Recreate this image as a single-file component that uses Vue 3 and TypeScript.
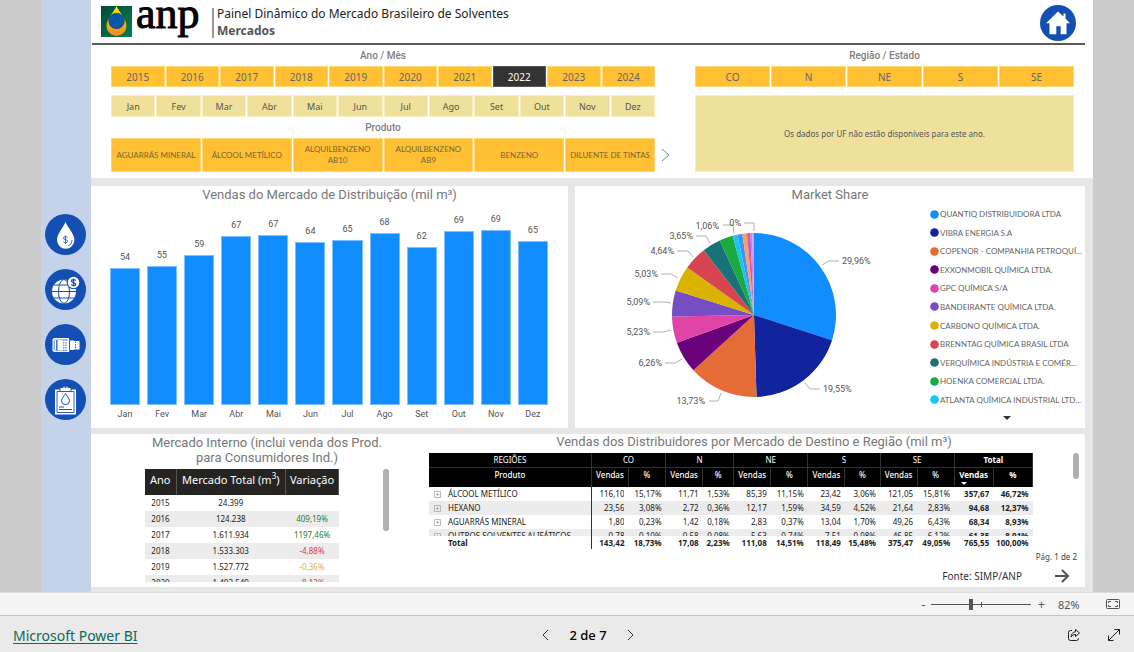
<script setup lang="ts">
import { ref } from 'vue'

interface Slice { share: number; color: string }
interface Callout { text: string; x: number; y: number; anchor: 'start' | 'end'; line: string }

const years = [2015, 2016, 2017, 2018, 2019, 2020, 2021, 2022, 2023, 2024]
const selectedYear = ref(2022)
const months = ['Jan', 'Fev', 'Mar', 'Abr', 'Mai', 'Jun', 'Jul', 'Ago', 'Set', 'Out', 'Nov', 'Dez']
const products = ['AGUARRÁS MINERAL', 'ÁLCOOL METÍLICO', 'ALQUILBENZENO AB10', 'ALQUILBENZENO AB9', 'BENZENO', 'DILUENTE DE TINTAS']
const regions = ['CO', 'N', 'NE', 'S', 'SE']
const zoom = ref(40)

const sales = [54.0, 54.8, 59.1, 66.9, 67.1, 64.3, 65.4, 67.8, 62.3, 68.8, 69.2, 64.9]
const axisMax = 83

const slices: Slice[] = [
  { share: 29.96, color: '#118dff' },
  { share: 19.55, color: '#12239e' },
  { share: 13.73, color: '#e66c37' },
  { share: 6.26, color: '#6b007b' },
  { share: 5.23, color: '#e044a7' },
  { share: 5.09, color: '#744ec2' },
  { share: 5.03, color: '#d9b300' },
  { share: 4.64, color: '#d64550' },
  { share: 3.65, color: '#197278' },
  { share: 2.67, color: '#1aab40' },
  { share: 0.95, color: '#15c6f4' },
  { share: 0.97, color: '#4092ff' },
  { share: 0.91, color: '#ffa058' },
  { share: 0.65, color: '#be5dc9' },
  { share: 0.39, color: '#f472d0' },
  { share: 0.32, color: '#b5a1ff' },
]
const radius = 82
const total = slices.reduce((sum, s) => sum + s.share, 0)
const point = (share: number): string => {
  const a = (share / total) * Math.PI * 2
  return `${(Math.sin(a) * radius).toFixed(2)} ${(-Math.cos(a) * radius).toFixed(2)}`
}
let run = 0
const wedges = slices.map((s) => {
  const from = run
  run += s.share
  return { color: s.color, d: `M0 0L${point(from)}A${radius} ${radius} 0 0 1 ${point(run)}Z` }
})

const callouts: Callout[] = [
  { text: '29,96%', x: 88, y: -51, anchor: 'start', line: '68,-50 75,-54 85,-54' },
  { text: '19,55%', x: 69, y: 77, anchor: 'start', line: '51,68 56,74 66,74' },
  { text: '13,73%', x: -49, y: 89, anchor: 'end', line: '-33,78 -36,86 -45,86' },
  { text: '6,26%', x: -92, y: 51, anchor: 'end', line: '-72,44 -79,48 -89,48' },
  { text: '5,23%', x: -104, y: 20, anchor: 'end', line: '-83,15 -90,17 -101,17' },
  { text: '5,09%', x: -104, y: -10, anchor: 'end', line: '-83,-12 -90,-13 -101,-13' },
  { text: '5,03%', x: -96, y: -38, anchor: 'end', line: '-76,-37 -83,-41 -93,-41' },
  { text: '4,64%', x: -80, y: -61, anchor: 'end', line: '-61,-58 -66,-64 -77,-64' },
  { text: '3,65%', x: -61, y: -76, anchor: 'end', line: '-44,-72 -48,-79 -58,-79' },
  { text: '1,06%', x: -35, y: -86, anchor: 'end', line: '-20,-82 -21,-90 -31,-90' },
  { text: '0%', x: -13, y: -89, anchor: 'end', line: '0,-84 0,-92 -10,-92' },
]

const companies = [
  'QUANTIQ DISTRIBUIDORA LTDA', 'VIBRA ENERGIA S.A', 'COPENOR - COMPANHIA PETROQUÍ...', 'EXXONMOBIL QUÍMICA LTDA.',
  'GPC QUÍMICA S/A', 'BANDEIRANTE QUÍMICA LTDA.', 'CARBONO QUÍMICA LTDA.', 'BRENNTAG QUÍMICA BRASIL LTDA',
  'VERQUÍMICA INDÚSTRIA E COMÉR...', 'HOENKA COMERCIAL LTDA.', 'ATLANTA QUÍMICA INDUSTRIAL LTD...',
]

const market = [
  { year: 2015, total: '24.399', change: '', tone: '' },
  { year: 2016, total: '124.238', change: '409,19%', tone: 'up' },
  { year: 2017, total: '1.611.934', change: '1197,46%', tone: 'up' },
  { year: 2018, total: '1.533.303', change: '-4,88%', tone: 'down' },
  { year: 2019, total: '1.527.772', change: '-0,36%', tone: 'flat' },
  { year: 2020, total: '1.403.549', change: '-8,13%', tone: 'down' },
]

const groups = ['CO', 'N', 'NE', 'S', 'SE', 'Total']
const matrix = [
  { name: 'ÁLCOOL METÍLICO', cells: ['116,10', '15,17%', '11,71', '1,53%', '85,39', '11,15%', '23,42', '3,06%', '121,05', '15,81%', '357,67', '46,72%'] },
  { name: 'HEXANO', cells: ['23,56', '3,08%', '2,72', '0,36%', '12,17', '1,59%', '34,59', '4,52%', '21,64', '2,83%', '94,68', '12,37%'] },
  { name: 'AGUARRÁS MINERAL', cells: ['1,80', '0,23%', '1,42', '0,18%', '2,83', '0,37%', '13,04', '1,70%', '49,26', '6,43%', '68,34', '8,93%'] },
  { name: 'OUTROS SOLVENTES ALIFÁTICOS', cells: ['0,78', '0,10%', '0,58', '0,08%', '5,63', '0,74%', '7,51', '0,98%', '46,85', '6,12%', '61,35', '8,01%'] },
]
const totals = ['143,42', '18,73%', '17,08', '2,23%', '111,08', '14,51%', '118,49', '15,48%', '375,47', '49,05%', '765,55', '100,00%']
</script>

<template>
  <div class="page">
    <div class="canvas">
      <div class="report">
        <nav class="side" aria-label="Seções">
          <button class="round" aria-label="Preços">
            <svg viewBox="0 0 41 41"><circle cx="20.500" cy="20.500" r="20.500" fill="#1450b4" /><path d="M20.500 8C18 14 12 20 12 26a8.700 8.700 0 0 0 17.400 0C29.400 20 23 14 20.500 8Z" fill="#fff" /><path d="M27 26c0 3-1.500 5-4 6" fill="none" stroke="#1450b4" stroke-width=".8" /><path d="M22.600 23.500c-.7-1.300-4.200-1.200-4.200.5 0 2 4.300 1.100 4.300 3.200 0 1.900-3.700 1.900-4.500.4M20.500 21.500v8.500" fill="none" stroke="#1450b4" stroke-width=".8" /></svg>
          </button>
          <button class="round" aria-label="Comércio exterior">
            <svg viewBox="0 0 41 41"><circle cx="20.500" cy="20.500" r="20.500" fill="#1450b4" /><circle cx="19" cy="22.500" r="12" fill="#fff" /><g fill="none" stroke="#1450b4" stroke-width="1"><ellipse cx="19" cy="22.500" rx="5.500" ry="12" /><path d="M7 22.500h24M9 16h20M9 29h20" /></g><circle cx="28.500" cy="13.500" r="6.800" fill="#1450b4" /><circle cx="28.500" cy="13.500" r="5.700" fill="#fff" /><path d="M30.700 11.700c-.8-1.600-4.300-1.300-4.300.3 0 2.100 4.400 1 4.400 3.200 0 1.800-3.700 1.900-4.600.3M28.500 9.500v8" fill="none" stroke="#1450b4" stroke-width="1.200" /></svg>
          </button>
          <button class="round" aria-label="Produtos">
            <svg viewBox="0 0 41 41"><circle cx="20.500" cy="20.500" r="20.500" fill="#1450b4" /><path d="M7.500 15.500 9 14h14.500l1 1.500V16.500H29v.5h5.500v8.500H29v.5h-4.500v1L23.500 28H9l-1.500-1.500Z" fill="#fff" /><g fill="none" stroke="#1450b4"><path d="M9.200 16.500v9.500" stroke-width=".7" /><path d="M11.800 16v10.500" stroke-width="1.200" /><path d="M18.800 15.500v12M21 15.500v12" stroke-width=".8" stroke-dasharray="1.500 1" /><path d="M24.500 15.500v11" stroke-width=".9" /><path d="M30.500 17.500v7.500" stroke-width=".8" stroke-dasharray="1.500 1" /><path d="M9 15.800h14M9.500 26.800h13" stroke-width=".4" /></g></svg>
          </button>
          <button class="round" aria-label="Relatórios">
            <svg viewBox="0 0 41 41"><circle cx="20.500" cy="20.500" r="20.500" fill="#1450b4" /><path d="M10 10.500h21v25H10Z" fill="#fff" /><path d="M12 12.500h17v21H12Z" fill="none" stroke="#1450b4" stroke-width=".9" /><path d="M15 12.500V8.500h3a2.700 2.700 0 0 1 5 0h3v4Z" fill="#fff" stroke="#1450b4" stroke-width=".9" /><circle cx="20.500" cy="8" r="1" fill="#1450b4" /><path d="M20.500 14.500c-1.500 3-4 5-4 7.200a4 4 0 0 0 8 0c0-2.200-2.500-4.200-4-7.200ZM14 28h5M14 30.500h13" fill="none" stroke="#1450b4" stroke-width="1" /></svg>
          </button>
        </nav>

        <main class="main">
          <section class="top">
            <header class="head">
              <div class="logo">
                <svg viewBox="0 0 31 31" aria-hidden="true"><defs><linearGradient id="flame" x1="0" y1="0" x2="0" y2="1"><stop offset="0" stop-color="#ffe60a" /><stop offset="1" stop-color="#f08a24" /></linearGradient><linearGradient id="field" x1="0" y1="0" x2="1" y2="1"><stop offset="0" stop-color="#004a35" /><stop offset="1" stop-color="#078050" /></linearGradient></defs><rect width="31" height="31" fill="url(#field)" /><path d="M15.500 0C13 6 5.500 13 5.500 20a10 10 0 0 0 20 0C25.500 13 18 6 15.500 0Z" fill="url(#flame)" /><circle cx="15.500" cy="15" r="7.800" fill="#0757a5" stroke="#063766" stroke-width=".6" /></svg>
                <span class="wordmark">anp</span>
              </div>
              <div class="heading">
                <h1>Painel Dinâmico do Mercado Brasileiro de Solventes</h1>
                <p>Mercados</p>
              </div>
              <button class="home" aria-label="Início">
                <svg viewBox="0 0 36 36"><circle cx="18" cy="18" r="18" fill="#1450b4" /><path d="M18 6.500 6 18.200h3.500v11h6.800v-8h4.400v8h5.800v-11h3.500L25.500 13.500V8.500h-2v3Z" fill="#fff" /></svg>
              </button>
            </header>

            <div class="filters">
              <h2 class="label left r1">Ano / Mês</h2>
              <h2 class="label right r1">Região / Estado</h2>
              <div class="tiles left r2">
                <button v-for="y in years" :key="y" class="tile big" :class="{ on: y === selectedYear }" :aria-pressed="y === selectedYear" @click="selectedYear = y">{{ y }}</button>
              </div>
              <div class="tiles right r2">
                <button v-for="r in regions" :key="r" class="tile big">{{ r }}</button>
              </div>
              <div class="tiles left r4">
                <button v-for="m in months" :key="m" class="tile soft">{{ m }}</button>
              </div>
              <h2 class="label left r5">Produto</h2>
              <div class="tiles left r6">
                <button v-for="p in products" :key="p" class="tile product">{{ p }}</button>
              </div>
              <button class="more" aria-label="Próximos produtos">
                <svg viewBox="0 0 9 14"><path d="m1 1 7 6-7 6" fill="none" stroke="#4e9aa8" stroke-width="1" /></svg>
              </button>
              <p class="notice">Os dados por UF não estão disponíveis para este ano.</p>
            </div>
          </section>

          <div class="charts">
            <section class="card">
              <h2 class="title">Vendas do Mercado de Distribuição (mil m³)</h2>
              <div class="plot">
                <div v-for="(v, i) in sales" :key="i" class="column">
                  <span class="value">{{ Math.round(v) }}</span>
                  <div class="bar" :style="{ height: (v / axisMax) * 100 + '%' }"></div>
                </div>
              </div>
              <div class="axis"><span v-for="m in months" :key="m">{{ m }}</span></div>
            </section>

            <section class="card">
              <h2 class="title">Market Share</h2>
              <div class="share">
                <svg class="pie" viewBox="-155 -106 310 206" role="img" aria-label="Market Share">
                  <path v-for="w in wedges" :key="w.d" :d="w.d" :fill="w.color" />
                  <g v-for="c in callouts" :key="c.text">
                    <polyline :points="c.line" fill="none" stroke="#b3b0ad" />
                    <text :x="c.x" :y="c.y" :text-anchor="c.anchor">{{ c.text }}</text>
                  </g>
                </svg>
                <div class="legend">
                  <ul>
                    <li v-for="(c, i) in companies" :key="c"><svg viewBox="0 0 9 9"><circle cx="4.500" cy="4.500" r="4.300" :fill="slices[i].color" /></svg>{{ c }}</li>
                  </ul>
                  <button aria-label="Mais itens"><svg viewBox="0 0 8 4"><path d="M0 0h8L4 4Z" fill="#333" /></svg></button>
                </div>
              </div>
            </section>
          </div>

          <section class="tables">
            <div class="internal">
              <h2 class="title">Mercado Interno (inclui venda dos Prod. para Consumidores Ind.)</h2>
              <div class="scroller">
                <table class="yearly">
                  <colgroup><col class="c-year" /><col /><col class="c-change" /></colgroup>
                  <thead><tr><th>Ano</th><th>Mercado Total (m<sup>3</sup>)</th><th>Variação</th></tr></thead>
                  <tbody>
                    <tr v-for="m in market" :key="m.year"><td>{{ m.year }}</td><td>{{ m.total }}</td><td :class="m.tone">{{ m.change }}</td></tr>
                  </tbody>
                </table>
                <div class="thumb tall"></div>
              </div>
            </div>

            <div class="dist">
              <h2 class="title">Vendas dos Distribuidores por Mercado de Destino e Região (mil m³)</h2>
              <div class="wide">
                <table class="matrix">
                  <colgroup><col class="w-name" /><col class="w-m" /><col class="w-m" /><col class="w-m" /><col class="w-s" /><col class="w-m" /><col class="w-m" /><col class="w-m" /><col class="w-p" /><col class="w-m" /><col class="w-m" /><col class="w-l" /><col class="w-l" /></colgroup>
                  <thead>
                    <tr class="h1"><th>REGIÕES</th><th v-for="g in groups" :key="g" colspan="2" :class="{ strong: g === 'Total' }">{{ g }}</th></tr>
                    <tr class="h2">
                      <th>Produto</th>
                      <template v-for="g in groups" :key="g">
                        <th :class="{ strong: g === 'Total' }">Vendas<i v-if="g === 'Total'" class="sort"></i></th>
                        <th :class="{ strong: g === 'Total' }">%</th>
                      </template>
                    </tr>
                  </thead>
                  <tbody>
                    <tr v-for="r in matrix" :key="r.name">
                      <th scope="row"><div class="cell"><button class="expand" :aria-label="'Expandir ' + r.name"><svg viewBox="0 0 7 7"><path d="M.5.5h6v6h-6ZM2 3.500h3M3.500 2v3" fill="none" stroke="#aaa" stroke-width=".8" /></svg></button>{{ r.name }}</div></th>
                      <td v-for="(c, i) in r.cells" :key="i" :class="{ strong: i > 9 }"><div class="cell">{{ c }}</div></td>
                    </tr>
                  </tbody>
                  <tfoot><tr><th scope="row">Total</th><td v-for="(c, i) in totals" :key="i">{{ c }}</td></tr></tfoot>
                </table>
                <div class="thumb short"></div>
              </div>
              <p class="pageno">Pág. 1 de 2</p>
              <div class="source">
                <span>Fonte: SIMP/ANP</span>
                <button aria-label="Próxima página"><svg viewBox="0 0 14 14"><path d="M0 7h12M7 1l6 6-6 6" fill="none" stroke="#555" stroke-width="2" /></svg></button>
              </div>
            </div>
          </section>
        </main>
      </div>
    </div>

    <div class="status">
      <button aria-label="Reduzir">-</button>
      <div class="range"><input v-model="zoom" type="range" min="0" max="100" aria-label="Zoom" /></div>
      <button aria-label="Ampliar">+</button>
      <span class="percent">82%</span>
      <button class="fit" aria-label="Ajustar à página"><svg viewBox="0 0 14 10"><rect x=".5" y=".5" width="13" height="9" rx="1" fill="none" stroke="#555" /><path d="M5 2.500H2.500v1.500M9 2.500h2.500v1.500M2.500 6v1.500H5M11.500 6v1.500H9" fill="none" stroke="#555" /></svg></button>
    </div>

    <footer class="foot">
      <a href="#">Microsoft Power BI</a>
      <div class="pager">
        <button aria-label="Anterior"><svg viewBox="0 0 7 12"><path d="M6 1 1 6l5 5" fill="none" stroke="#333" /></svg></button>
        <span>2 de 7</span>
        <button aria-label="Próxima"><svg viewBox="0 0 7 12"><path d="m1 1 5 5-5 5" fill="none" stroke="#333" /></svg></button>
      </div>
      <div class="tools">
        <button aria-label="Compartilhar"><svg viewBox="0 0 14 14"><path d="M5 2.500H3.500a2 2 0 0 0-2 2v6a2 2 0 0 0 2 2h6a2 2 0 0 0 2-2V10M8.500 1.500l4 3.500-4 3.500V6.500C6.500 6.500 5 7.500 4 9c.2-3 2-5 4.500-5.300Z" fill="none" stroke="#222" stroke-linejoin="round" /></svg></button>
        <button aria-label="Tela inteira"><svg viewBox="0 0 14 14"><path d="M7.500 1.500h5v5M12.500 1.500l-11 11M1.500 7.500v5h5" fill="none" stroke="#222" /></svg></button>
      </div>
    </footer>
  </div>
</template>

<style>
body { margin: 0; }
</style>

<style scoped>
* { box-sizing: border-box; }
button { padding: 0; border: 0; background: none; color: inherit; font: inherit; cursor: pointer; }
h1, h2, p, ul { margin: 0; padding: 0; font-weight: 400; }
ul { list-style: none; }
svg { display: block; }
.page { min-height: 100vh; display: flex; flex-direction: column; font-family: "Noto Sans", "Open Sans", sans-serif; font-size: 8px; color: #333; background: #eaeaea; }
.canvas { flex: 1; padding: 0 41px; background: #cbcbcb; }
.report { display: flex; height: 100%; background: #e6e6e6; }
.side { flex: 0 0 50px; display: flex; flex-direction: column; align-items: center; gap: 14px; padding: 214px 1px 0 0; background: #c5d3ea; }
.round svg { width: 41px; height: 41px; }
.main { flex: 1; min-width: 0; padding-bottom: 5px; }
.top { background: #fff; padding-bottom: 6px; }
.head { display: flex; height: 45px; margin: 0 8px 0 1px; padding: 4px 9px 0; border-bottom: 2px solid #5a5a5a; }
.logo { display: flex; width: 111px; gap: 4px; padding-top: 2px; }
.logo svg { width: 31px; height: 31px; flex: none; }
.wordmark { font: 44px/30px "Liberation Serif", serif; color: #000; margin-top: -7px; -webkit-text-stroke: 1px #000; }
.heading { flex: 1; height: 30px; margin-top: 4px; padding-left: 3px; border-left: 2px solid #999; }
.heading h1 { font-size: 12px; line-height: 18px; color: #222; margin-top: -3px; }
.heading p { font-size: 12px; line-height: 16px; font-weight: 700; color: #555; }
.home { margin-top: -2px; }
.home svg { width: 36px; height: 36px; }
.filters { display: grid; grid-template-columns: minmax(0, 544fr) 40px minmax(0, 379fr); grid-template-rows: 21px 21px 8px 22px 21px 34px; padding: 0 19px 0 20px; }
.label { font: 500 10px/21px Roboto, sans-serif; color: #808080; text-align: center; }
.left { grid-column: 1; }
.right { grid-column: 3; }
.r1 { grid-row: 1; }
.r2 { grid-row: 2; }
.r4 { grid-row: 4; }
.r5 { grid-row: 5; }
.r6 { grid-row: 6; }
.tiles { display: grid; grid-auto-flow: column; grid-auto-columns: minmax(0, 1fr); gap: 1px; }
.tile { background: #ffc033; border: 1px solid #ffd778; color: #666; font-size: 9px; }
.big { font-size: 10px; }
.soft { background: #efe19b; border-color: #f5ecbf; color: #555; }
.product { font: 8px/11px Lato, sans-serif; color: #7a6534; padding: 0 3px; }
.on { background: #333; border-color: #555; color: #fff; }
.more { grid-column: 2; grid-row: 6; padding-left: 6px; }
.more svg { width: 9px; height: 14px; }
.notice { grid-column: 3; grid-row: 4 / 7; display: flex; align-items: center; justify-content: center; background: #efe19b; border: 1px solid #f5ecbf; color: #555; font-size: 8px; }
.charts { display: grid; grid-template-columns: minmax(0, 477fr) minmax(0, 510fr); gap: 7px; padding: 8px 8px 6px 0; }
.card { background: #fff; height: 242px; }
.title { font: 400 13px/15px Roboto, sans-serif; color: #777; text-align: center; }
.card .title { padding-top: 1px; }
.plot, .axis { display: flex; gap: 7px; padding: 0 20px 0 19px; }
.plot { height: 210px; margin-top: -7px; }
.column { flex: 1; min-width: 0; display: flex; flex-direction: column; justify-content: flex-end; }
.value { text-align: center; font: 9px/12px Roboto, sans-serif; color: #555; margin-bottom: 5px; }
.bar { flex: none; background: #118dff; border: 1px solid #7fc1ff; }
.axis { margin-top: 4px; color: #555; }
.axis span { flex: 1; text-align: center; font: 9px/11px Roboto, sans-serif; }
.share { display: flex; justify-content: space-between; padding: 7px 2px 0 24px; }
.pie { width: 310px; height: 206px; flex: none; }
.pie text { font: 9px Roboto, sans-serif; fill: #555; }
.legend { width: 153px; margin-left: -4px; }
.legend ul { height: 204px; display: flex; flex-direction: column; justify-content: space-between; margin-top: -4px; }
.legend li { display: flex; align-items: center; gap: 1px; font: 8px/18px Lato, sans-serif; color: #666; white-space: nowrap; }
.legend li svg { width: 9px; height: 9px; }
.legend button { display: block; margin: 7px auto 0; }
.legend button svg { width: 8px; height: 4px; }
.tables { display: flex; gap: 40px; min-height: 153px; margin-right: 8px; padding: 0 6px 0 54px; background: #fff; border-radius: 0 2px 0 0; }
.internal { flex: 0 0 244px; padding-top: 1px; }
.scroller { display: flex; justify-content: space-between; height: 113px; margin-top: 4px; overflow: hidden; }
table { border-collapse: collapse; table-layout: fixed; }
th, td { padding: 0; }
.yearly { width: 194px; height: 0; }
.c-year { width: 31px; }
.c-change { width: 53px; }
.yearly th { height: 26px; background: #252423; color: #fff; font-size: 11px; font-weight: 400; line-height: 13px; vertical-align: top; padding-top: 4px; border-right: 1px solid #555; white-space: nowrap; }
.yearly sup { font-size: 8px; line-height: 0; }
.yearly td { height: 16px; line-height: 16px; text-align: center; color: #222; }
.yearly tr:nth-child(even) td { background: #ececec; }
.yearly .up { color: #1e7d1e; }
.yearly .down { color: #d63b40; }
.yearly .flat { color: #dcb43c; }
.thumb { flex: none; width: 6px; border-radius: 3px; background: #b0b0b0; }
.tall { height: 62px; }
.short { height: 26px; }
.dist { flex: 1; min-width: 0; }
.dist .title { height: 19px; }
.wide { display: flex; justify-content: space-between; }
.matrix { flex: 0 0 604px; width: 604px; color: #222; }
.w-name { width: 162px; }
.w-s { width: 31px; }
.w-p { width: 35px; }
.w-m { width: 37px; }
.w-l { width: 39px; }
.matrix thead th { background: #000; color: #fff; font-weight: 400; border-right: 1px solid #333; }
.matrix .h1 th { height: 14px; line-height: 13px; border-bottom: 1px solid #333; }
.matrix .h2 th { position: relative; height: 20px; line-height: 12px; vertical-align: top; padding-top: 1px; font-weight: 500; }
.matrix thead .strong, .matrix .h2 .strong { font-weight: 700; }
.sort { position: absolute; left: 6px; bottom: 2px; border: 3px solid transparent; border-top-color: #fff; border-bottom: 0; }
.cell { height: 14px; line-height: 14px; overflow: hidden; white-space: nowrap; }
.matrix tbody tr:last-child .cell { height: 7px; }
.matrix tbody tr:nth-child(even) { background: #ececec; }
.matrix tbody th, .matrix tfoot th { text-align: left; font-weight: 400; border-right: 1px solid #333; }
.matrix td { text-align: right; padding-right: 4px; }
.matrix tbody .strong { font-weight: 700; }
.matrix tfoot th { padding-left: 19px; }
.matrix tfoot th, .matrix tfoot td { font-weight: 700; height: 13px; line-height: 13px; }
.expand { float: left; width: 19px; height: 14px; padding-left: 5px; }
.expand svg { width: 7px; height: 7px; }
.pageno { text-align: right; line-height: 16px; padding-right: 2px; color: #444; }
.source { display: flex; justify-content: flex-end; align-items: center; gap: 33px; height: 22px; padding-right: 10px; font-size: 10px; }
.source svg { width: 14px; height: 14px; }
.status { display: flex; align-items: center; justify-content: flex-end; height: 24px; padding-right: 14px; background: #f4f4f4; border-top: 1px solid #dcdcdc; border-bottom: 1px solid #c4c4c4; color: #555; font-size: 11px; }
.status button { width: 7px; font-size: 12px; }
.range { width: 100px; margin: 0 7px 0 4px; background: linear-gradient(#555, #555) 50px 50% / 1px 5px no-repeat; }
.range input { display: block; width: 100%; height: 12px; margin: 0; appearance: none; background: linear-gradient(#555, #555) 0 50% / 100% 1px no-repeat; }
.range input::-webkit-slider-thumb { appearance: none; width: 4px; height: 11px; background: #555; }
.percent { margin-left: 13px; width: 24px; }
.status .fit { width: 14px; margin-left: 24px; }
.fit svg { width: 14px; height: 10px; }
.foot { display: grid; grid-template-columns: 1fr auto 1fr; align-items: center; height: 36px; padding: 2px 13px 0; background: #eaeaea; font-size: 13px; color: #000; }
.foot a { font-size: 14px; color: #0b6a5c; text-underline-offset: 2px; }
.pager { display: flex; align-items: center; gap: 20px; margin-left: 42px; font-weight: 500; }
.pager svg { width: 7px; height: 12px; }
.tools { display: flex; justify-content: flex-end; gap: 26px; }
.tools svg { width: 14px; height: 14px; }
</style>
